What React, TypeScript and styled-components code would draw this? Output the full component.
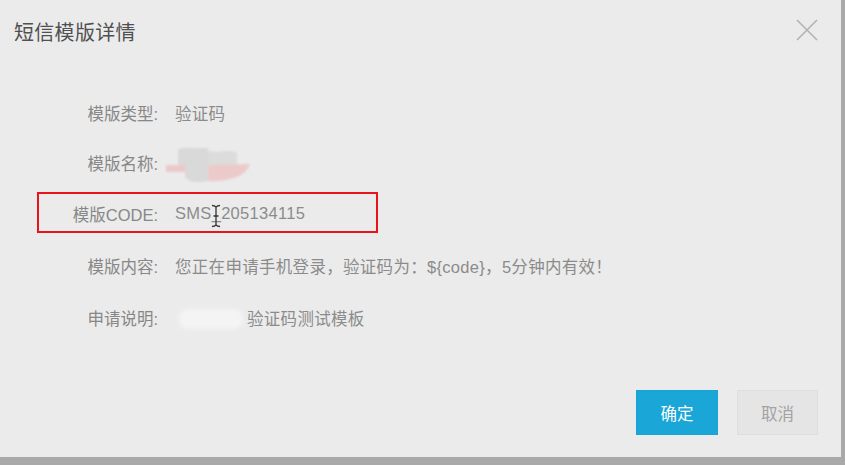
import React from "react";
import styled, { createGlobalStyle } from "styled-components";

const Global = createGlobalStyle`
  html, body { margin: 0; padding: 0; background: #a9a9a9; }
  body { width: 845px; height: 465px; overflow: hidden;
    font-family: "Liberation Sans", "Noto Sans CJK SC", sans-serif; }
`;

const Dialog = styled.div`
  width: 841px;
  height: 457px;
  background: #ebebeb;
  display: flex;
  flex-direction: column;
  box-sizing: border-box;
  position: relative;
`;

const Header = styled.div`
  height: 62px;
  display: flex;
  align-items: center;
  justify-content: space-between;
  padding: 0 22px 0 14px;
  flex-shrink: 0;
`;

const Title = styled.h1`
  margin: 0;
  font-size: 20px;
  font-weight: 400;
  color: #505050;
  letter-spacing: 0.3px;
`;

const CloseButton = styled.button`
  width: 24px;
  height: 24px;
  padding: 0;
  border: 0;
  background: transparent;
  display: flex;
  align-items: center;
  justify-content: center;
  margin-top: -2px;
`;

const Body = styled.div`
  padding-top: 26px;
  display: flex;
  flex-direction: column;
  flex: 1;
`;

const Row = styled.div<{ $h: number }>`
  position: relative;
  height: ${(p) => p.$h}px;
  display: grid;
  grid-template-columns: 158px auto;
  column-gap: 17px;
  align-items: center;
  font-size: 16.5px;
`;

const Label = styled.span`
  text-align: right;
  color: #878787;
  white-space: nowrap;
`;

const Value = styled.span`
  color: #8b8b8b;
  white-space: nowrap;
  display: flex;
  align-items: center;
  letter-spacing: 0.3px;
`;

const Highlight = styled.div`
  position: absolute;
  left: 37px;
  top: 4px;
  width: 341px;
  height: 41px;
  border: 2px solid #e8131c;
  box-sizing: border-box;
  pointer-events: none;
`;

const Cursor = styled.svg`
  position: absolute;
  left: 211px;
  top: 16px;
`;

const Blur = styled.svg`
  display: block;
`;

const Footer = styled.div`
  display: flex;
  justify-content: flex-end;
  gap: 19px;
  padding: 0 23px 22px 0;
`;

const Btn = styled.button<{ $primary?: boolean }>`
  width: ${(p) => (p.$primary ? 82 : 81)}px;
  height: 45px;
  font-family: inherit;
  font-size: 16.5px;
  box-sizing: border-box;
  border: 1px solid ${(p) => (p.$primary ? "#17a3d4" : "#dedede")};
  background: ${(p) => (p.$primary ? "#1aa7d8" : "#e5e5e5")};
  color: ${(p) => (p.$primary ? "#ffffff" : "#a3a3a3")};
  cursor: pointer;
`;

export default function App() {
  return (
    <>
      <Global />
      <Dialog>
        <Header>
          <Title>短信模版详情</Title>
          <CloseButton aria-label="close">
            <svg width="22" height="22" viewBox="0 0 22 22">
              <path d="M1 1 L21 21 M21 1 L1 21" stroke="#b2b2b2" strokeWidth="1.6" fill="none" />
            </svg>
          </CloseButton>
        </Header>
        <Body>
          <Row $h={50}>
            <Label>模版类型:</Label>
            <Value>验证码</Value>
          </Row>
          <Row $h={50}>
            <Label>模版名称:</Label>
            <Value>
              <Blur width="90" height="40" viewBox="0 0 90 40" style={{ marginLeft: -10 }}>
                <defs>
                  <filter id="b1" x="-20%" y="-20%" width="140%" height="140%">
                    <feGaussianBlur stdDeviation="1" />
                  </filter>
                </defs>
                <g filter="url(#b1)">
                  <path d="M1 22 L20 22 L20 29 L1 29 Q0 25 1 22 Z" fill="#ecc9c9" />
                  <path d="M13 6 Q20 4 30 5 L43 5 L43 38 L36 39 Q24 40 20 34 L20 22 L13 22 Z" fill="#d9d9d9" />
                  <path d="M43 8 L52 9 Q62 7 72 9 L72 22 L43 22 Z" fill="#dcdcdc" />
                  <path d="M43 22 L85 21 Q82 30 72 34 Q58 39 43 38 Z" fill="#edcaca" />
                </g>
              </Blur>
            </Value>
          </Row>
          <Row $h={51}>
            <Highlight />
            <Label>模版CODE:</Label>
            <Value>SMS_205134115</Value>
            <Cursor width="10" height="24" viewBox="0 0 10 24">
              <path d="M1 1.5 Q3.5 1.5 5 3 Q6.5 1.5 9 1.5 M5 3 L5 21 M1 22.5 Q3.5 22.5 5 21 Q6.5 22.5 9 22.5 M2.5 12 L7.5 12" stroke="#333" strokeWidth="1.3" fill="none" />
            </Cursor>
          </Row>
          <Row $h={53}>
            <Label>模版内容:</Label>
            <Value>您正在申请手机登录，验证码为：${"{code}"}，5分钟内有效！</Value>
          </Row>
          <Row $h={51}>
            <Label>申请说明:</Label>
            <Value>
              <Blur width="72" height="30" viewBox="0 0 72 30">
                <defs>
                  <filter id="b2" x="-20%" y="-30%" width="140%" height="160%">
                    <feGaussianBlur stdDeviation="2" />
                  </filter>
                </defs>
                <rect x="4" y="6" width="64" height="20" rx="9" fill="#f4f4f4" filter="url(#b2)" />
              </Blur>
              验证码测试模板
            </Value>
          </Row>
        </Body>
        <Footer>
          <Btn $primary>确定</Btn>
          <Btn>取消</Btn>
        </Footer>
      </Dialog>
    </>
  );
}
